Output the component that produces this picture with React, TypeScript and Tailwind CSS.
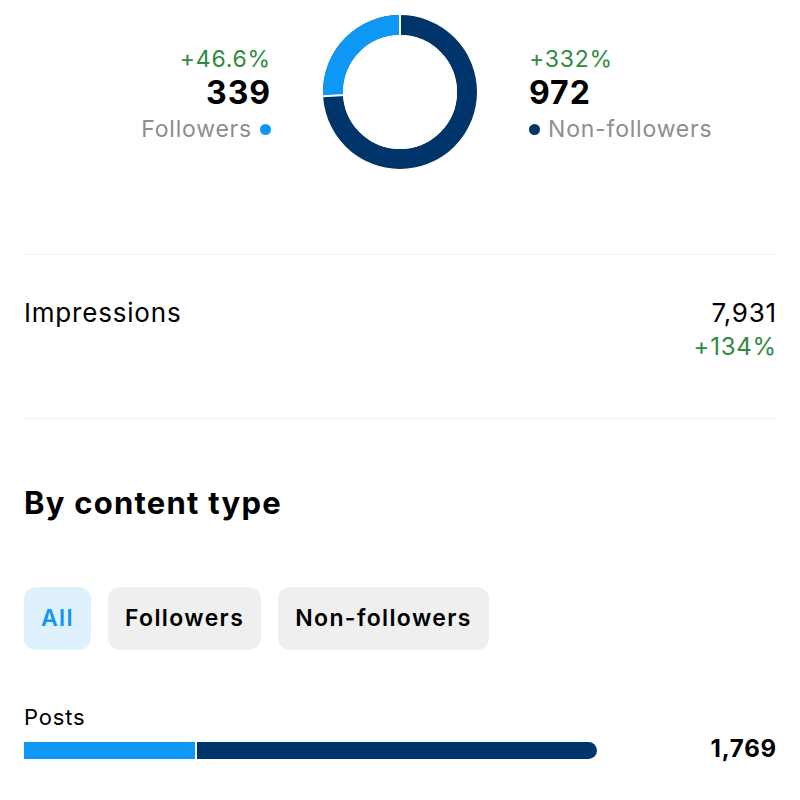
const FOLLOWERS = 339;
const NON_FOLLOWERS = 972;

const Donut = () => {
  const r = 67;
  const c = 2 * Math.PI * r;
  const share = FOLLOWERS / (FOLLOWERS + NON_FOLLOWERS);
  const angle = share * 2 * Math.PI;
  // end point of the followers arc, measured counter-clockwise from 12 o'clock
  const ex = 77 - Math.sin(angle) * 90;
  const ey = 77 - Math.cos(angle) * 90;
  return (
    <svg width="154" height="154" viewBox="0 0 154 154">
      <circle cx="77" cy="77" r={r} fill="none" stroke="#00356b" strokeWidth="20" />
      <circle
        cx="77"
        cy="77"
        r={r}
        fill="none"
        stroke="#0f97f5"
        strokeWidth="20"
        strokeDasharray={`${share * c} ${c}`}
        transform="rotate(-90 77 77) scale(1 -1) translate(0 -154)"
      />
      <line x1="77" y1="77" x2="77" y2="-10" stroke="#fff" strokeWidth="2" />
      <line x1="77" y1="77" x2={ex} y2={ey} stroke="#fff" strokeWidth="2" />
      <circle cx="77" cy="77" r="57" fill="#fff" />
    </svg>
  );
};

const chips = ["All", "Followers", "Non-followers"];

export default function App() {
  return (
    <div
      className="w-[800px] h-[800px] overflow-hidden bg-white px-6 text-black tracking-[0.05em]"
      style={{ fontFamily: "Inter, 'Noto Sans', sans-serif" }}
    >
      {/* Audience split */}
      <div className="grid grid-cols-[1fr_auto_1fr] gap-x-[52px] pt-[15px] h-[254px]">
        <div className="flex flex-col items-end pt-[30px]">
          <span className="text-[23px] leading-[28px] text-[#2e8b3e]">+46.6%</span>
          <span className="text-[32px] leading-[40px] font-bold tracking-[0.03em]">339</span>
          <span className="flex items-center gap-2 text-[23px] leading-[32px] text-[#8e8e8e]">
            Followers
            <span className="w-[11px] h-[11px] rounded-full bg-[#0f97f5]" />
          </span>
        </div>
        <Donut />
        <div className="flex flex-col items-start pt-[30px]">
          <span className="text-[23px] leading-[28px] text-[#2e8b3e]">+332%</span>
          <span className="text-[32px] leading-[40px] font-bold tracking-[0.03em]">972</span>
          <span className="flex items-center gap-2 text-[23px] leading-[32px] text-[#8e8e8e]">
            <span className="w-[11px] h-[11px] rounded-full bg-[#00356b]" />
            Non-followers
          </span>
        </div>
      </div>

      {/* Impressions */}
      <div className="border-t border-b border-[#efefef] h-[165px] pt-[42px] flex justify-between">
        <span className="text-[26px] leading-[32px]">Impressions</span>
        <div className="flex flex-col items-end -mr-[1px]">
          <span className="text-[26px] leading-[32px]">7,931</span>
          <span className="text-[24px] leading-[32px] mt-[2px] text-[#2e8b3e]">+134%</span>
        </div>
      </div>

      <h2 className="mt-[65px] text-[31px] leading-[38px] font-bold tracking-[0.04em]">
        By content type
      </h2>

      <div className="mt-[65px] flex gap-[17px]">
        {chips.map((label, i) => (
          <button
            key={label}
            className={
              i === 0
                ? "h-[63px] px-[17px] rounded-xl bg-[#e0f1fe] text-[#0f97f5] text-[23px] font-semibold tracking-[0.06em]"
                : "h-[63px] px-[17px] rounded-xl bg-[#efefef] text-black text-[23px] font-semibold tracking-[0.06em]"
            }
          >
            {label}
          </button>
        ))}
      </div>

      {/* Content rows */}
      <div className="mt-[53px]">
        <div className="text-[22px] leading-[28px]">Posts</div>
        <div className="mt-[6px] h-[24px] flex items-center">
          <div className="w-[573px] h-[17px] mt-[2px] flex rounded-r-full overflow-hidden">
            <div className="w-[171px] bg-[#0f97f5]" />
            <div className="w-[2px] bg-white" />
            <div className="flex-1 bg-[#00356b]" />
          </div>
          <span className="ml-auto -mr-[1px] text-[24px] leading-[24px] font-bold">1,769</span>
        </div>
        <div className="mt-[34px] text-[22px] leading-[28px]">Reels</div>
      </div>
    </div>
  );
}
